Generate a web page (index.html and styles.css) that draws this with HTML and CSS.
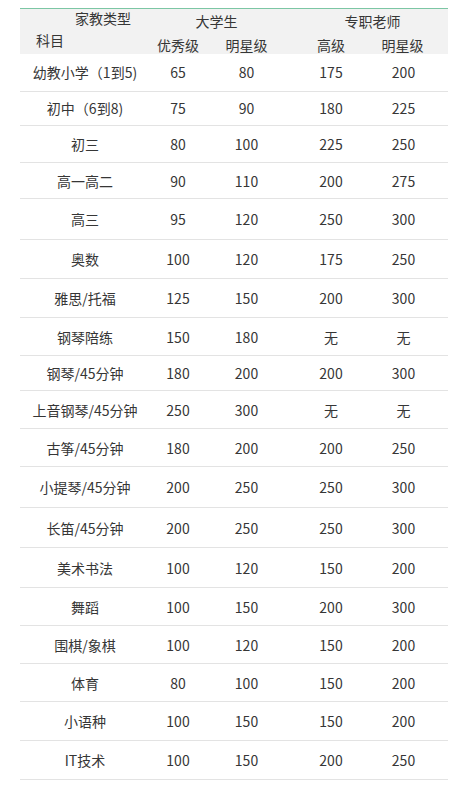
FILE: index.html
```html
<!DOCTYPE html>
<html lang="zh-CN">
<head>
<meta charset="utf-8">
<title>家教收费标准</title>
<link rel="stylesheet" href="styles.css">
</head>
<body>
<div class="sheet">
  <div class="head">
    <div class="corner">
      <span class="corner-top">家教类型</span>
      <span class="corner-bottom">科目</span>
    </div>
    <div class="group group-student">大学生</div>
    <div class="group group-teacher">专职老师</div>
    <div class="sub">优秀级</div>
    <div class="sub">明星级</div>
    <div class="sub">高级</div>
    <div class="sub last">明星级</div>
  </div>
  <div class="body">
    <div class="row"><span>幼教小学（1到5)</span><span>65</span><span>80</span><span>175</span><span class="last">200</span></div>
    <div class="row"><span>初中（6到8)</span><span>75</span><span>90</span><span>180</span><span class="last">225</span></div>
    <div class="row"><span>初三</span><span>80</span><span>100</span><span>225</span><span class="last">250</span></div>
    <div class="row"><span>高一高二</span><span>90</span><span>110</span><span>200</span><span class="last">275</span></div>
    <div class="row"><span>高三</span><span>95</span><span>120</span><span>250</span><span class="last">300</span></div>
    <div class="row"><span>奥数</span><span>100</span><span>120</span><span>175</span><span class="last">250</span></div>
    <div class="row"><span>雅思/托福</span><span>125</span><span>150</span><span>200</span><span class="last">300</span></div>
    <div class="row"><span>钢琴陪练</span><span>150</span><span>180</span><span>无</span><span class="last">无</span></div>
    <div class="row"><span>钢琴/45分钟</span><span>180</span><span>200</span><span>200</span><span class="last">300</span></div>
    <div class="row"><span>上音钢琴/45分钟</span><span>250</span><span>300</span><span>无</span><span class="last">无</span></div>
    <div class="row"><span>古筝/45分钟</span><span>180</span><span>200</span><span>200</span><span class="last">250</span></div>
    <div class="row"><span>小提琴/45分钟</span><span>200</span><span>250</span><span>250</span><span class="last">300</span></div>
    <div class="row"><span>长笛/45分钟</span><span>200</span><span>250</span><span>250</span><span class="last">300</span></div>
    <div class="row"><span>美术书法</span><span>100</span><span>120</span><span>150</span><span class="last">200</span></div>
    <div class="row"><span>舞蹈</span><span>100</span><span>150</span><span>200</span><span class="last">300</span></div>
    <div class="row"><span>围棋/象棋</span><span>100</span><span>120</span><span>150</span><span class="last">200</span></div>
    <div class="row"><span>体育</span><span>80</span><span>100</span><span>150</span><span class="last">200</span></div>
    <div class="row"><span>小语种</span><span>100</span><span>150</span><span>150</span><span class="last">200</span></div>
    <div class="row"><span>IT技术</span><span>100</span><span>150</span><span>200</span><span class="last">250</span></div>
  </div>
</div>
</body>
</html>
```

FILE: styles.css
```css
html, body {
  margin: 0;
  padding: 0;
  background: #ffffff;
}

body {
  font-family: "Noto Sans CJK SC", "Noto Sans", sans-serif;
  font-size: 14px;
  color: #363636;
  padding: 8px 21px 0 20px;
}

.sheet {
  width: 428px;
  border-top: 1.5px solid #7cc6a4;
}

.head {
  display: grid;
  grid-template-columns: 128px 60px 77px 92px 71px;
  grid-template-rows: 25px 20px;
  background: #f2f2f2;
  height: 45px;
}

.corner {
  grid-row: 1 / span 2;
  grid-column: 1;
  display: flex;
  flex-direction: column;
}

.corner-top {
  line-height: 18px;
  padding-left: 55px;
}

.corner-bottom {
  line-height: 22px;
  margin-top: 2px;
  padding-left: 16px;
}

.group {
  text-align: center;
  line-height: 25px;
}

.group-student {
  grid-column: 2 / span 2;
}

.group-teacher {
  grid-column: 4 / span 2;
  padding-left: 12px;
}

.sub {
  text-align: center;
  line-height: 22px;
  grid-row: 2;
}

.head .sub.last {
  padding-right: 20px;
}

.row {
  display: grid;
  grid-template-columns: 128px 60px 77px 92px 71px;
  align-items: center;
  border-bottom: 1px solid #e3e3e3;
  box-sizing: border-box;
  height: 38px;
}

.row span {
  text-align: center;
  white-space: nowrap;
}

.row span:first-child {
  padding-left: 2px;
}

.row .last {
  padding-right: 18px;
}

.row:nth-child(1) { height: 37.5px; }
.row:nth-child(2) { height: 34.5px; }
.row:nth-child(3) { height: 37px; }
.row:nth-child(4) { height: 36px; }
.row:nth-child(5) { height: 41px; }
.row:nth-child(6) { height: 39px; }
.row:nth-child(7) { height: 39px; }
.row:nth-child(8) { height: 38px; }
.row:nth-child(9) { height: 35px; }
.row:nth-child(10) { height: 38px; }
.row:nth-child(11) { height: 38px; }
.row:nth-child(12) { height: 41px; }
.row:nth-child(13) { height: 40px; }
.row:nth-child(14) { height: 40px; }
.row:nth-child(15) { height: 38px; }
.row:nth-child(16) { height: 38px; }
.row:nth-child(17) { height: 38px; }
.row:nth-child(18) { height: 39px; }
.row:nth-child(19) { height: 39px; }
```
